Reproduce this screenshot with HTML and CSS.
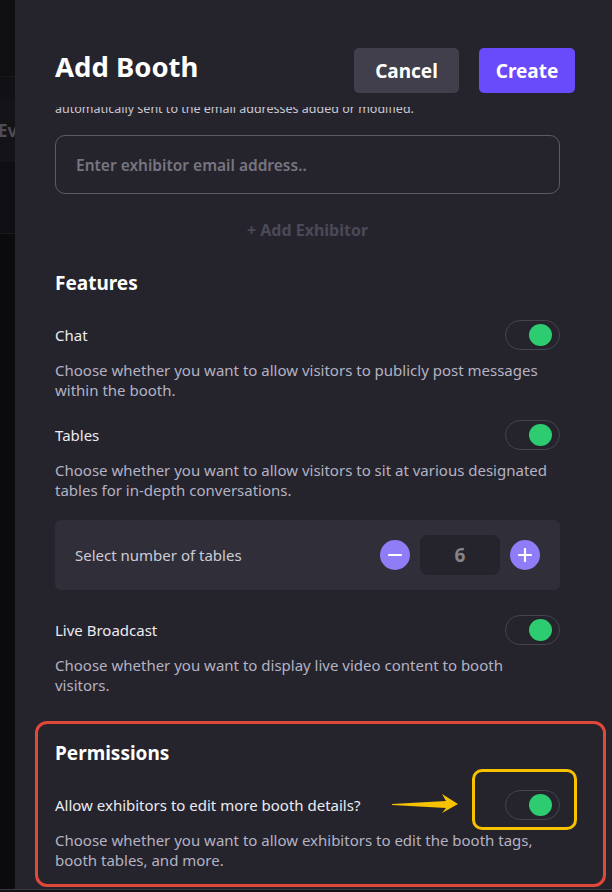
FILE: index.html
```html
<!DOCTYPE html>
<html lang="en">
<head>
<meta charset="utf-8">
<title>Add Booth</title>
<link rel="stylesheet" href="styles.css">
</head>
<body>
<div class="screen">
  <aside class="backdrop">
    <div class="bd-top"></div>
    <div class="bd-band1"></div>
    <div class="bd-band2"><span class="bd-text">Events</span></div>
    <div class="bd-band3"></div>
    <div class="bd-rest"></div>
  </aside>
  <section class="panel">
    <header class="panel-head">
      <h1 class="title">Add Booth</h1>
      <div class="actions">
        <button class="btn btn-cancel">Cancel</button>
        <button class="btn btn-create">Create</button>
      </div>
    </header>
    <div class="panel-body">
      <p class="hint">automatically sent to the email addresses added or modified.</p>
      <div class="input">Enter exhibitor email address..</div>
      <div class="add-link">+ Add Exhibitor</div>

      <h2 class="section-title">Features</h2>

      <div class="row">
        <span class="label">Chat</span>
        <span class="toggle"><span class="knob"></span></span>
      </div>
      <p class="desc">Choose whether you want to allow visitors to publicly post messages within the booth.</p>

      <div class="row">
        <span class="label">Tables</span>
        <span class="toggle"><span class="knob"></span></span>
      </div>
      <p class="desc">Choose whether you want to allow visitors to sit at various designated tables for in-depth conversations.</p>

      <div class="stepper-card">
        <span class="stepper-label">Select number of tables</span>
        <div class="stepper">
          <span class="round-btn">
            <svg width="14" height="14" viewBox="0 0 14 14"><path d="M1 7h12" stroke="#fff" stroke-width="2.2" stroke-linecap="round"/></svg>
          </span>
          <span class="count">6</span>
          <span class="round-btn">
            <svg width="14" height="14" viewBox="0 0 14 14"><path d="M1 7h12M7 1v12" stroke="#fff" stroke-width="2.2" stroke-linecap="round"/></svg>
          </span>
        </div>
      </div>

      <div class="row row-live">
        <span class="label">Live Broadcast</span>
        <span class="toggle"><span class="knob"></span></span>
      </div>
      <p class="desc">Choose whether you want to display live video content to booth visitors.</p>

      <div class="permissions">
        <h2 class="section-title perm-title">Permissions</h2>
        <div class="row row-perm">
          <span class="label">Allow exhibitors to edit more booth details?</span>
          <span class="toggle"><span class="knob"></span></span>
          <svg class="arrow" width="66" height="20" viewBox="0 0 66 20"><polygon points="0,10 54,7 50,0 66,10 50,19 54,14 0,11" fill="#f9c200"/></svg>
          <span class="highlight"></span>
        </div>
        <p class="desc">Choose whether you want to allow exhibitors to edit the booth tags, booth tables, and more.</p>
      </div>
    </div>
  </section>
  <div class="bottom-bar"></div>
</div>
</body>
</html>
```

FILE: styles.css
```css
* { box-sizing: border-box; }

html, body {
  margin: 0;
  padding: 0;
  background: #0c0b0e;
  font-family: "Noto Sans", "Open Sans", sans-serif;
}

.screen {
  width: 612px;
  height: 892px;
  display: grid;
  grid-template-columns: 15px 1fr;
  grid-template-rows: 889px 3px;
  overflow: hidden;
}

/* background app peeking out on the left */
.backdrop {
  display: flex;
  flex-direction: column;
  background: #0b0a0d;
  overflow: hidden;
}
.bd-top { height: 77px; background: #0f0e11; border-bottom: 1px solid #1a191d; }
.bd-band1 { height: 22px; background: #111014; }
.bd-band2 {
  height: 63px;
  background: #141317;
  display: flex;
  align-items: center;
  overflow: hidden;
}
.bd-text {
  font-size: 17px;
  font-weight: 700;
  color: #4e4c54;
  white-space: nowrap;
  margin-left: -2px;
}
.bd-band3 { height: 72px; background: #0f0e12; border-bottom: 1px solid #1a191d; }
.bd-rest { flex: 1; background: #0b0a0d; }

.bottom-bar {
  grid-column: 1 / 3;
  background: #131216;
  border-top: 1px solid #3a3940;
}

/* panel */
.panel {
  background: #25242d;
  display: flex;
  flex-direction: column;
  overflow: hidden;
}

.panel-head {
  height: 107px;
  flex: none;
  display: flex;
  justify-content: space-between;
  align-items: flex-start;
  padding: 48px 37px 0 40px;
}

.title {
  margin: 1px 0 0;
  font-size: 27.5px;
  line-height: 36px;
  font-weight: 700;
  color: #ffffff;
}

.actions { display: flex; gap: 20px; }

.btn {
  height: 45px;
  border: 0;
  border-radius: 5px;
  font-family: inherit;
  font-size: 19px;
  font-weight: 700;
  color: #ffffff;
  padding: 0;
}
.btn-cancel { width: 105px; background: #403f4b; }
.btn-create { width: 96px; background: #6a4bfb; }

.panel-body {
  flex: 1;
  overflow: hidden;
  padding: 0 52px 0 40px;
}

.hint {
  margin: -7px 0 0;
  font-size: 12.5px;
  line-height: 18px;
  color: #c9c7d3;
  white-space: nowrap;
}

.input {
  margin-top: 17px;
  height: 59px;
  border: 1px solid #5c5a67;
  border-radius: 10px;
  padding-left: 20px;
  display: flex;
  align-items: center;
  font-size: 15.5px;
  font-weight: 600;
  color: #77757f;
}

.add-link {
  margin-top: 26px;
  text-align: center;
  font-size: 16px;
  line-height: 20px;
  font-weight: 700;
  color: #4b4958;
}

.section-title {
  margin: 31px 0 0;
  font-size: 19px;
  line-height: 24px;
  font-weight: 700;
  color: #ffffff;
}

.row {
  margin-top: 25px;
  height: 30px;
  display: flex;
  justify-content: space-between;
  align-items: center;
}
.row + .desc + .row { margin-top: 20px; }

.label {
  font-size: 15px;
  color: #ecebf1;
}

.toggle {
  width: 55px;
  height: 30px;
  border: 1px solid #45444f;
  border-radius: 15px;
  display: flex;
  align-items: center;
  justify-content: flex-end;
  padding: 0 7px;
}
.knob {
  width: 23px;
  height: 22px;
  border-radius: 50%;
  background: #2ecc71;
}

.desc {
  margin: 10px 0 0;
  font-size: 15px;
  line-height: 20px;
  color: #b4b2c3;
}

.stepper-card {
  margin-top: 20px;
  height: 70px;
  background: #302f39;
  border-radius: 6px;
  padding: 0 20px;
  display: flex;
  align-items: center;
  justify-content: space-between;
}
.stepper-label {
  font-size: 15px;
  color: #cdccd6;
}
.stepper {
  display: flex;
  align-items: center;
  gap: 10px;
}
.round-btn {
  width: 30px;
  height: 30px;
  border-radius: 50%;
  background: #8f7df8;
  display: flex;
  align-items: center;
  justify-content: center;
}
.count {
  width: 80px;
  height: 40px;
  border-radius: 8px;
  background: #25242d;
  display: flex;
  align-items: center;
  justify-content: center;
  font-size: 19px;
  font-weight: 700;
  color: #85848c;
}

.row.row-live { margin-top: 25px; }

.permissions {
  margin: 26px -46px 0 -20px;
  border: 3px solid #e2483a;
  border-radius: 12px;
  padding: 17px 43px 14px 17px;
}
.perm-title { margin-top: 0; }

.row-perm { position: relative; }

.arrow {
  position: absolute;
  left: 337px;
  top: 4px;
}
.highlight {
  position: absolute;
  right: -17px;
  top: -21px;
  width: 105px;
  height: 61px;
  border: 3px solid #f8c200;
  border-radius: 10px;
}
```
